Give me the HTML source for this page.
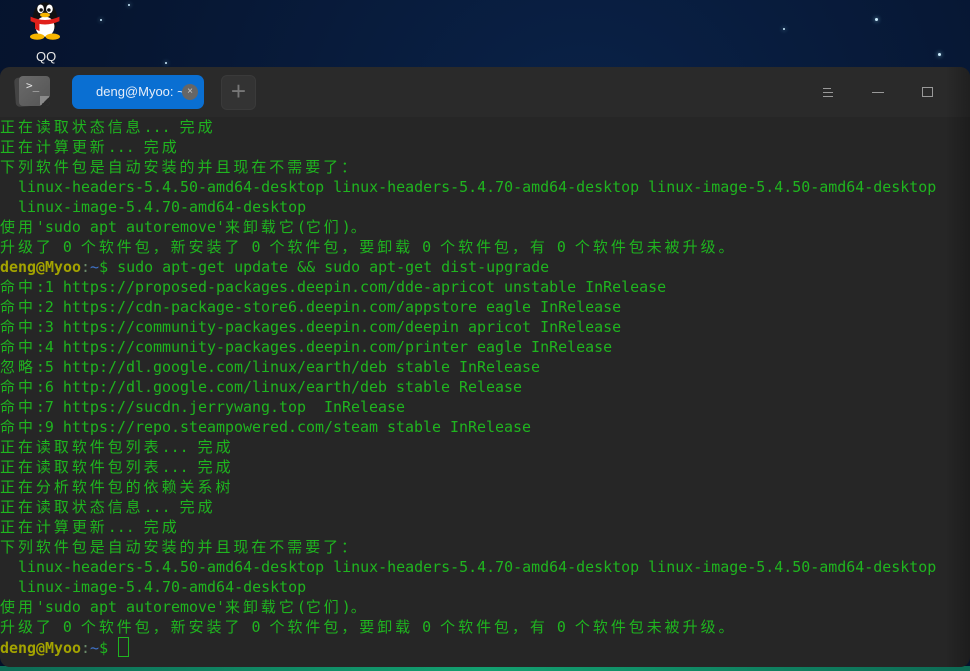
<!DOCTYPE html>
<html><head><meta charset="utf-8">
<style>
html,body{margin:0;padding:0}
body{width:970px;height:671px;overflow:hidden;position:relative;
background:radial-gradient(ellipse at 60% 20%,#0a2248 0%,#061530 60%,#04102a 100%);}
.star{position:absolute;width:3px;height:3px;background:#cfefff;border-radius:50%;box-shadow:0 0 4px #9de;}
#qq{position:absolute;left:25px;top:0px;width:40px;height:40px}
#qql{position:absolute;left:36px;top:49px;color:#e8e8e8;font:13px "Liberation Sans",sans-serif}
#teal{position:absolute;left:0;right:0;top:666px;height:5px;background:linear-gradient(90deg,#0d6b55,#12a070,#0d6b55)}
#win{position:absolute;left:0;top:67px;width:970px;height:600px;background:#262626;border-radius:10px;overflow:hidden}
#tb{position:absolute;left:0;top:0;width:970px;height:50px;background:#2a2a2a}
#tib{position:absolute;left:15px;top:10px;width:30px;height:29px;background:#444;border-radius:4px;transform:rotate(-4deg)}
#ticon{position:absolute;left:19px;top:9px;width:31px;height:30px;background:linear-gradient(135deg,#6a6a6a,#555);border-radius:4px;color:#e5e5e5;font:11px "DejaVu Sans Mono",monospace;overflow:hidden}
#ticon b{position:absolute;right:0;bottom:0;width:0;height:0;border-left:10px solid transparent;border-bottom:10px solid #2a2a2a}
#ticon u{position:absolute;right:0;bottom:0;width:10px;height:10px;background:linear-gradient(135deg,#8a8a8a 50%,transparent 50%);text-decoration:none}
#tab{position:absolute;left:72px;top:8px;width:132px;height:34px;background:#0a6fd2;border-radius:7px;color:#e8eef8;font:13px "Liberation Sans",sans-serif;line-height:34px}
#tab span{position:absolute;left:24px}
#tab i{position:absolute;left:110px;top:9px;width:16px;height:16px;border-radius:50%;background:#666;color:#ccc;font:10px/15px sans-serif;text-align:center;font-style:normal}
#plus{position:absolute;left:221px;top:8px;width:33px;height:33px;background:#333;border-radius:6px;border:1px solid #3a3a3a;color:#777;font:26px/31px "Liberation Sans",sans-serif;text-align:center}
#term{position:absolute;left:0;top:50px;font:14.96px/20px "DejaVu Sans Mono","Liberation Mono","Noto Sans CJK SC",monospace;color:#1fb51f;white-space:pre}
.c{font-family:"Noto Sans CJK SC","WenQuanYi Zen Hei",sans-serif;letter-spacing:3px}
.p{color:#a3a300;font-weight:bold}
.g{color:#6a8a6a}.b{color:#3f72c8}
.cur{display:inline-block;width:9px;height:18px;border:1px solid #1fb51f;vertical-align:-4px;margin-left:1px}
</style></head><body>
<div class="star" style="left:128px;top:4px;width:2px;height:2px"></div>
<div class="star" style="left:100px;top:19px;width:2px;height:2px"></div>
<div class="star" style="left:875px;top:18px"></div>
<div class="star" style="left:938px;top:53px"></div>
<div class="star" style="left:783px;top:28px;width:2px;height:2px"></div>
<div class="star" style="left:165px;top:62px;width:2px;height:2px"></div>
<svg id="qq" viewBox="0 0 36 36">
<ellipse cx="18" cy="17" rx="11" ry="15" fill="#111"/>
<ellipse cx="18" cy="24" rx="8.5" ry="9" fill="#fff"/>
<ellipse cx="14" cy="8" rx="3" ry="4" fill="#fff"/><ellipse cx="22" cy="8" rx="3" ry="4" fill="#fff"/>
<circle cx="14.5" cy="9" r="1.6" fill="#111"/><circle cx="21.5" cy="9" r="1.6" fill="#111"/>
<ellipse cx="18" cy="13.5" rx="4.5" ry="2" fill="#f7b500"/>
<path d="M5 15 Q18 21 31 15 L31 19 Q18 25 5 19Z" fill="#e0201b"/>
<path d="M9 19 L13 19 L13 28 L9 26Z" fill="#e0201b"/>
<ellipse cx="11" cy="33" rx="6.5" ry="2.8" fill="#f7b500"/><ellipse cx="25" cy="33" rx="6.5" ry="2.8" fill="#f7b500"/>
</svg>
<div id="qql">QQ</div>
<div id="teal"></div>
<div id="win">
<div id="tb">
<div id="tib"></div>
<div id="ticon"><span style="position:absolute;left:7px;top:3px">&gt;_</span><b></b><u></u></div>
<div id="tab"><span>deng@Myoo: ~</span><i>×</i></div>
<div id="plus">+</div>
<svg style="position:absolute;left:822px;top:20px" width="12" height="11"><path d="M1 1.5H9M1 5.5H11M1 9.5H11" stroke="#999" stroke-width="1"/></svg>
<svg style="position:absolute;left:872px;top:24px" width="13" height="3"><path d="M0 1.5H12" stroke="#999"/></svg>
<svg style="position:absolute;left:922px;top:20px" width="12" height="11"><rect x="0.5" y="0.5" width="10" height="9" fill="none" stroke="#999"/></svg>
</div>
<div style="position:absolute;right:0;top:0;width:25px;height:600px;background:linear-gradient(90deg,rgba(0,0,0,0),rgba(0,0,0,.25))"></div>
<div id="term"><span class="c">正在读取状态信息</span>... <span class="c">完成</span>
<span class="c">正在计算更新</span>... <span class="c">完成</span>
<span class="c">下列软件包是自动安装的并且现在不需要了：</span>
  linux-headers-5.4.50-amd64-desktop linux-headers-5.4.70-amd64-desktop linux-image-5.4.50-amd64-desktop
  linux-image-5.4.70-amd64-desktop
<span class="c">使用</span>'sudo apt autoremove'<span class="c">来卸载它</span>(<span class="c">它们</span>)<span class="c">。</span>
<span class="c">升级了</span> 0 <span class="c">个软件包，新安装了</span> 0 <span class="c">个软件包，要卸载</span> 0 <span class="c">个软件包，有</span> 0 <span class="c">个软件包未被升级。</span>
<span class="p">deng@Myoo</span><span class="g">:</span><span class="b">~</span>$ sudo apt-get update &amp;&amp; sudo apt-get dist-upgrade
<span class="c">命中</span>:1 https://proposed-packages.deepin.com/dde-apricot unstable InRelease
<span class="c">命中</span>:2 https://cdn-package-store6.deepin.com/appstore eagle InRelease
<span class="c">命中</span>:3 https://community-packages.deepin.com/deepin apricot InRelease
<span class="c">命中</span>:4 https://community-packages.deepin.com/printer eagle InRelease
<span class="c">忽略</span>:5 http://dl.google.com/linux/earth/deb stable InRelease
<span class="c">命中</span>:6 http://dl.google.com/linux/earth/deb stable Release
<span class="c">命中</span>:7 https://sucdn.jerrywang.top  InRelease
<span class="c">命中</span>:9 https://repo.steampowered.com/steam stable InRelease
<span class="c">正在读取软件包列表</span>... <span class="c">完成</span>
<span class="c">正在读取软件包列表</span>... <span class="c">完成</span>
<span class="c">正在分析软件包的依赖关系树</span>
<span class="c">正在读取状态信息</span>... <span class="c">完成</span>
<span class="c">正在计算更新</span>... <span class="c">完成</span>
<span class="c">下列软件包是自动安装的并且现在不需要了：</span>
  linux-headers-5.4.50-amd64-desktop linux-headers-5.4.70-amd64-desktop linux-image-5.4.50-amd64-desktop
  linux-image-5.4.70-amd64-desktop
<span class="c">使用</span>'sudo apt autoremove'<span class="c">来卸载它</span>(<span class="c">它们</span>)<span class="c">。</span>
<span class="c">升级了</span> 0 <span class="c">个软件包，新安装了</span> 0 <span class="c">个软件包，要卸载</span> 0 <span class="c">个软件包，有</span> 0 <span class="c">个软件包未被升级。</span>
<span class="p">deng@Myoo</span><span class="g">:</span><span class="b">~</span>$ <span class="cur"></span></div>
</div>
</body></html>
